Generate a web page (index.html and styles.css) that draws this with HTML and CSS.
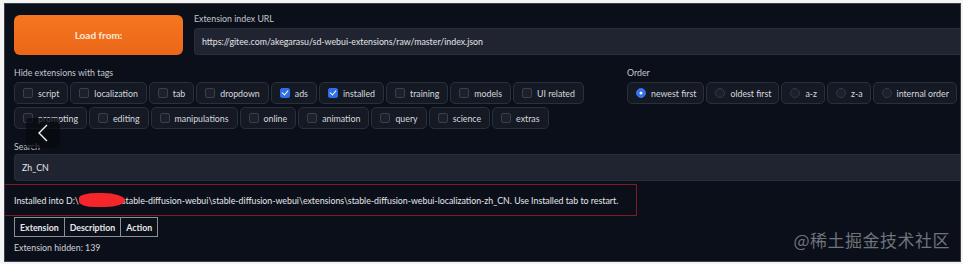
FILE: index.html
```html
<!DOCTYPE html>
<html lang="en">
<head>
    <meta charset="UTF-8">
    <title>Extensions - Available</title>
    <link rel="stylesheet" href="styles.css">
</head>
<body>
    <div class="panel">
        <div class="tab-gap"></div>

        <!-- Load row -->
        <div class="load-row">
            <button class="load-btn">Load from:</button>
            <div class="field grow">
                <label class="field-label">Extension index URL</label>
                <div class="text-input">https://gitee.com/akegarasu/sd-webui-extensions/raw/master/index.json</div>
            </div>
        </div>

        <!-- Filters -->
        <div class="filter-row">
            <div class="field">
                <label class="field-label">Hide extensions with tags</label>
                <div class="options tags">
                    <div class="option"><span class="box"></span>script</div>
                    <div class="option"><span class="box"></span>localization</div>
                    <div class="option"><span class="box"></span>tab</div>
                    <div class="option"><span class="box"></span>dropdown</div>
                    <div class="option"><span class="box checked"></span>ads</div>
                    <div class="option"><span class="box checked"></span>installed</div>
                    <div class="option"><span class="box"></span>training</div>
                    <div class="option"><span class="box"></span>models</div>
                    <div class="option"><span class="box"></span>UI related</div>
                    <div class="option"><span class="box"></span>prompting</div>
                    <div class="option"><span class="box"></span>editing</div>
                    <div class="option"><span class="box"></span>manipulations</div>
                    <div class="option"><span class="box"></span>online</div>
                    <div class="option"><span class="box"></span>animation</div>
                    <div class="option"><span class="box"></span>query</div>
                    <div class="option"><span class="box"></span>science</div>
                    <div class="option"><span class="box"></span>extras</div>
                </div>
            </div>
            <div class="field">
                <label class="field-label">Order</label>
                <div class="options single-line">
                    <div class="option"><span class="radio selected"></span>newest first</div>
                    <div class="option"><span class="radio"></span>oldest first</div>
                    <div class="option"><span class="radio"></span>a-z</div>
                    <div class="option"><span class="radio"></span>z-a</div>
                    <div class="option"><span class="radio"></span>internal order</div>
                </div>
            </div>
        </div>

        <!-- Search -->
        <div class="field search">
            <label class="field-label">Search</label>
            <div class="text-input">Zh_CN</div>
        </div>

        <div class="message">
            Installed into D:\<span class="redact"></span>stable-diffusion-webui\stable-diffusion-webui\extensions\stable-diffusion-webui-localization-zh_CN. Use Installed tab to restart.
        </div>

        <table class="ext-table">
            <tr>
                <th>Extension</th>
                <th>Description</th>
                <th>Action</th>
            </tr>
        </table>

        <p class="hidden-count">Extension hidden: 139</p>

        <!-- overlays -->
        <div class="nav-arrow">
            <svg width="12" height="18" viewBox="0 0 12 18"><polyline points="10,1 2,9 10,17" fill="none" stroke="#f2f2f2" stroke-width="1.4"/></svg>
        </div>
        <div class="watermark">@稀土掘金技术社区</div>
    </div>
</body>
</html>
```

FILE: styles.css
```css
:root {
    --bg-panel: #0b0f19;
    --bg-input: #1f2430;
    --bg-option: #141924;
    --border-option: #2a303b;
    --text-primary: #d6d9de;
    --text-label: #c3c7ce;
    --accent-blue: #2f6ee6;
}

* {
    margin: 0;
    padding: 0;
    box-sizing: border-box;
}

body {
    background: #f4f4f4;
    font-family: Lato, "Noto Sans", sans-serif;
    font-size: 8.8px;
    color: var(--text-primary);
    padding: 3px 2px 0 4px;
}

.panel {
    position: relative;
    height: 259px;
    background: var(--bg-panel);
    border: 1px solid #3a404c;
    padding: 9px 0 0 9px;
    overflow: hidden;
}

.tab-gap {
    position: absolute;
    top: -1px;
    left: 61px;
    width: 63px;
    height: 1px;
    background: var(--bg-panel);
}

/* Load row */
.load-row {
    display: flex;
    gap: 11px;
    align-items: flex-end;
}

.load-btn {
    width: 169px;
    height: 40px;
    border: none;
    border-radius: 6px;
    background: linear-gradient(180deg, #f6761f 0%, #eb6718 100%);
    color: #fde9da;
    font-family: Lato, sans-serif;
    font-weight: 700;
    font-size: 10px;
}

.field {
    display: flex;
    flex-direction: column;
}

.grow {
    flex: 1;
}

.field-label {
    color: var(--text-label);
    font-size: 8.8px;
    line-height: 12px;
    margin-bottom: 3px;
}

.text-input {
    height: 27px;
    background: var(--bg-input);
    border: 1px solid #282e3a;
    border-right: none;
    border-radius: 4px 0 0 4px;
    padding: 0 7px;
    display: flex;
    align-items: center;
    color: #e3e5e8;
}

/* Filters */
.filter-row {
    display: grid;
    grid-template-columns: 603px 1fr;
    gap: 10px;
    margin-top: 12px;
}

.options {
    display: flex;
    flex-wrap: wrap;
    gap: 3px 2px;
}

.options.single-line {
    flex-wrap: nowrap;
}

.option {
    height: 22px;
    display: flex;
    align-items: center;
    gap: 5px;
    padding: 0 7px 0 8px;
    background: var(--bg-option);
    border: 1px solid var(--border-option);
    border-radius: 5px;
    color: var(--text-primary);
    white-space: nowrap;
}

.tags .option {
    padding: 0 8px;
}

.box {
    width: 10px;
    height: 10px;
    border: 1px solid #3a404b;
    border-radius: 2px;
    background: #1b202a;
    position: relative;
}

.box.checked {
    background: var(--accent-blue);
    border-color: var(--accent-blue);
}

.box.checked::after {
    content: "";
    position: absolute;
    left: 2px;
    top: 0px;
    width: 3px;
    height: 5px;
    border: solid #fff;
    border-width: 0 1.4px 1.4px 0;
    transform: rotate(40deg);
}

.radio {
    width: 10px;
    height: 10px;
    border-radius: 50%;
    border: 1px solid #333946;
    background: #1b202a;
}

.radio.selected {
    background: var(--accent-blue);
    border-color: var(--accent-blue);
    box-shadow: inset 0 0 0 2.5px var(--accent-blue), inset 0 0 0 5px #fff;
}

/* Search */
.search {
    margin-top: 12px;
}

.search .field-label {
    margin-bottom: 1px;
}

.message {
    margin: 3px 0 0 -10px;
    width: 633px;
    height: 32px;
    border: 1px solid #7c1d22;
    padding: 0 9px;
    display: flex;
    align-items: center;
    color: #e6e7ea;
    white-space: nowrap;
}

.redact {
    display: inline-block;
    width: 46px;
    height: 14px;
    margin: 0 -3px 0 0;
    background: #f5262b;
    border-radius: 45% 55% 50% 40% / 40% 60% 55% 45%;
    position: relative;
    z-index: 1;
}

.ext-table {
    margin-top: 1px;
    border-collapse: collapse;
}

.ext-table th {
    border: 1px solid #8a8f98;
    padding: 0 5px;
    height: 19px;
    font-weight: 700;
    color: #e6e7ea;
    font-size: 8.8px;
}

.hidden-count {
    margin-top: 5px;
    color: #d0d3d8;
}

/* Overlays */
.nav-arrow {
    position: absolute;
    left: 21px;
    top: 114px;
    width: 34px;
    height: 30px;
    background: rgba(8, 10, 16, 0.75);
    border-radius: 3px;
    display: flex;
    align-items: center;
    justify-content: center;
}

.watermark {
    position: absolute;
    right: 10px;
    bottom: 9px;
    font-family: "Noto Sans CJK SC", "Noto Sans", sans-serif;
    font-size: 17px;
    color: #6f737b;
    letter-spacing: 0.5px;
}
```
